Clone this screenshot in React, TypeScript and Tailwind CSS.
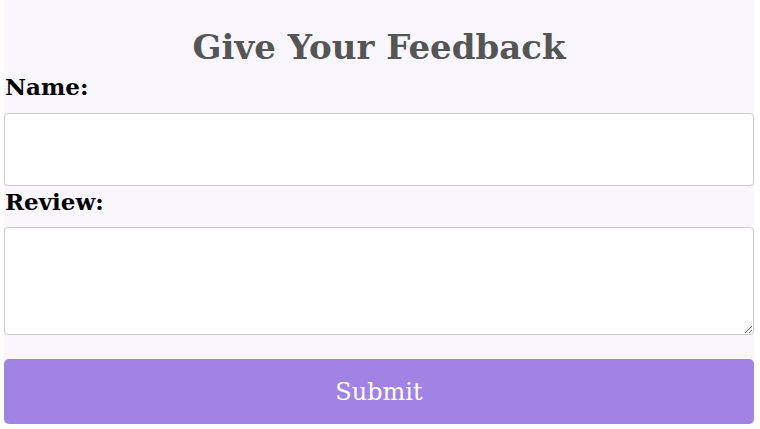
import React, { useState } from 'react';

const serif = { fontFamily: '"DejaVu Serif", "Liberation Serif", serif' };

export default function App() {
  const [name, setName] = useState('');
  const [review, setReview] = useState('');

  return (
    <div className="min-h-[429px] bg-white" style={serif}>
      <form
        className="ml-[4px] w-[750px] bg-[#f9f6fe] flex flex-col"
        onSubmit={(e) => e.preventDefault()}
      >
        <h1 className="pt-[21px] text-center text-[34px] leading-[52px] font-bold text-[#555555]">
          Give Your Feedback
        </h1>
        <label htmlFor="name" className="pl-[1px] text-[23px] leading-[28px] font-bold text-black">
          Name:
        </label>
        <input
          id="name"
          value={name}
          onChange={(e) => setName(e.target.value)}
          className="mt-[12px] h-[73px] w-full rounded-[4px] border border-[#cccccc] bg-white px-2"
        />
        <label
          htmlFor="review"
          className="mt-[2px] pl-[1px] text-[23px] leading-[28px] font-bold text-black"
        >
          Review:
        </label>
        <textarea
          id="review"
          value={review}
          onChange={(e) => setReview(e.target.value)}
          className="mt-[11px] h-[108px] w-full rounded-[4px] border border-[#cccccc] bg-white px-2"
        />
        <button
          type="submit"
          className="mt-[24px] h-[65px] w-full rounded-[5px] bg-[#a183e4] text-[24px] text-white"
        >
          Submit
        </button>
      </form>
    </div>
  );
}
